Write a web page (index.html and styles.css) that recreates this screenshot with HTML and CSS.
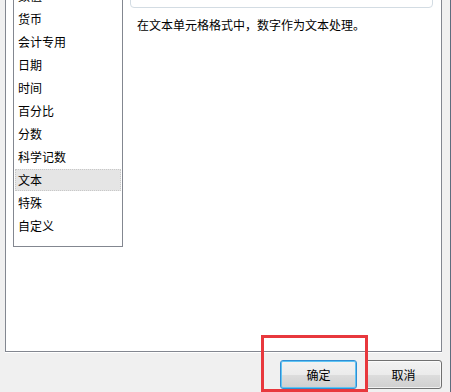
FILE: index.html
```html
<!DOCTYPE html>
<html lang="zh-CN">
<head>
<meta charset="utf-8">
<title>设置单元格格式</title>
<link rel="stylesheet" href="styles.css">
</head>
<body>
<div class="window">
  <div class="panel">
    <div class="categories">
      <ul class="cat-list">
        <li>数值</li>
        <li>货币</li>
        <li>会计专用</li>
        <li>日期</li>
        <li>时间</li>
        <li>百分比</li>
        <li>分数</li>
        <li>科学记数</li>
        <li class="selected">文本</li>
        <li>特殊</li>
        <li>自定义</li>
      </ul>
    </div>
    <div class="detail">
      <div class="sample-box"></div>
      <p class="desc">在文本单元格格式中，数字作为文本处理。</p>
    </div>
  </div>
  <div class="actions">
    <button class="btn btn-default">确定</button>
    <button class="btn">取消</button>
  </div>
  <div class="highlight-mark"></div>
</div>
</body>
</html>
```
FILE: styles.css
```css
html, body {
  margin: 0;
  padding: 0;
}
body {
  background: #f0f0f0;
  font-family: "Noto Sans CJK SC", "Noto Sans", sans-serif;
  font-size: 12px;
  color: #000;
  width: 451px;
  height: 392px;
  overflow: hidden;
}
.window {
  position: relative;
  box-sizing: border-box;
  width: 451px;
  height: 392px;
  border-right: 1px solid #5d6d7e;
}
.panel {
  box-sizing: border-box;
  margin-left: 5px;
  width: 437px;
  height: 352px;
  background: #fff;
  border: 1px solid #838790;
  border-top: none;
  box-shadow: 0 1px 0 #fff;
  display: flex;
  align-items: flex-start;
  padding-left: 7px;
  gap: 7px;
}
.categories {
  box-sizing: border-box;
  width: 110px;
  height: 247px;
  border: 1px solid #838790;
  border-top: none;
  overflow: hidden;
  flex: none;
}
.cat-list {
  list-style: none;
  margin: -15px 0 0 0;
  padding: 0 1px;
}
.cat-list li {
  height: 22px;
  line-height: 22px;
  margin-bottom: 1px;
  padding-left: 3px;
  white-space: nowrap;
}
.cat-list li.selected {
  background: #e5e5e5;
  outline: 1px dotted #c8c8c8;
  outline-offset: -1px;
}
.detail {
  flex: none;
  width: 303px;
}
.sample-box {
  box-sizing: border-box;
  margin-top: -20px;
  height: 28px;
  border: 1px solid #d3dce3;
  border-radius: 4px;
}
.desc {
  margin: 9px 0 0 0;
  padding-left: 7px;
  line-height: 16px;
  white-space: nowrap;
}
.actions {
  display: flex;
  justify-content: flex-end;
  gap: 8px;
  padding: 8px 8px 0 0;
}
.btn {
  box-sizing: border-box;
  width: 77px;
  height: 29px;
  padding: 0;
  border: 1px solid #707070;
  border-radius: 3px;
  background: linear-gradient(#f2f2f2 0%, #ebebeb 50%, #dddddd 50%, #cfcfcf 100%);
  font-family: "Noto Sans CJK SC", "Noto Sans", sans-serif;
  font-size: 12px;
  color: #000;
  box-shadow: inset 0 0 0 1px rgba(255, 255, 255, 0.7);
}
.btn-default {
  border-color: #2f8ed4;
  box-shadow: inset 0 0 0 1px #5fc4f3;
}
.highlight-mark {
  position: absolute;
  left: 261px;
  top: 335px;
  width: 107px;
  height: 57px;
  box-sizing: border-box;
  border: 3px solid #e8383d;
}
```
